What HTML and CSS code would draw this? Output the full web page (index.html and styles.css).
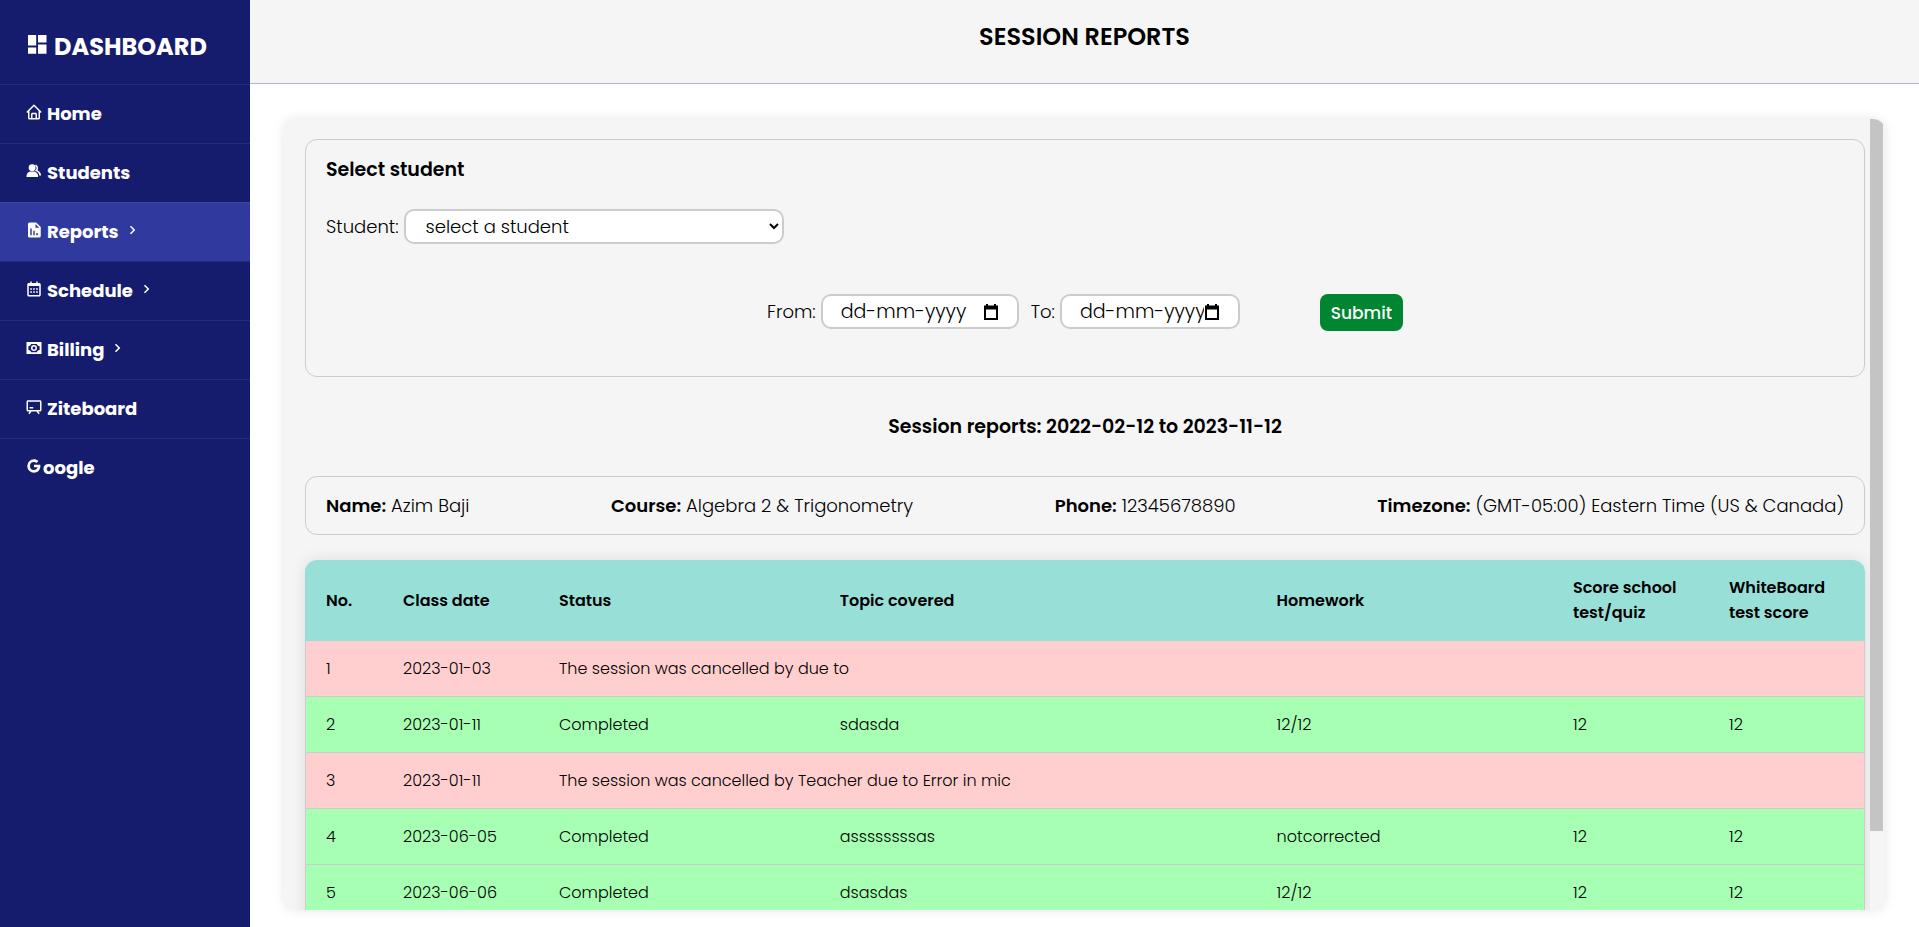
FILE: index.html
```html
<!DOCTYPE html>
<html lang="en">
<head>
<meta charset="utf-8">
<title>Session reports</title>
<link rel="stylesheet" href="styles.css">
</head>
<body>
<div class="app">
  <nav class="sidebar">
    <a class="brand" href="#">
      <svg class="brand-icon" viewBox="0 0 24 24"><path d="M3 3h8.200v10.500H3zM13 3h8.500v7.500H13zM3 15.500h8.200v6.300H3zM13 12.500h8.500v9.300H13z"/></svg>
      <span>DASHBOARD</span>
    </a>
    <a class="nav-item" href="#">
      <svg class="icon" viewBox="0 0 24 24"><path d="M3 13h1v7c0 1.103.897 2 2 2h12c1.103 0 2-.897 2-2v-7h1a1 1 0 0 0 .707-1.707l-9-9a.999.999 0 0 0-1.414 0l-9 9A1 1 0 0 0 3 13zm7 7v-5h4v5h-4zm2-15.586 6 6V20h-2v-5c0-1.103-.897-2-2-2h-4c-1.103 0-2 .897-2 2v5H6v-9.586l6-6z"/></svg>
      <span>Home</span>
    </a>
    <a class="nav-item" href="#">
      <svg class="icon" viewBox="0 0 24 24"><circle cx="9.500" cy="7.500" r="4.600"/><path d="M11 12.500H8c-3.309 0-6 2.691-6 6V20h15.500v-1.500c0-3.309-3.191-6-6.500-6z"/><path d="M16.604 11.048a5.670 5.670 0 0 0 .751-3.440c-.179-1.784-1.175-3.361-2.803-4.440l-1.105 1.666c1.119.742 1.800 1.799 1.918 2.974a3.693 3.693 0 0 1-1.072 2.986l-1.192 1.192 1.618.475C18.951 13.701 19 17.957 19 18h2.500c0-1.789-1.456-5.285-4.896-6.952z"/></svg>
      <span>Students</span>
    </a>
    <a class="nav-item active" href="#">
      <svg class="icon" viewBox="0 0 24 24"><path fill-rule="evenodd" d="m21 8-6-6H6a2 2 0 0 0-2 2v16a2 2 0 0 0 2 2h13a2 2 0 0 0 2-2V8zM9 19H7v-9h2v9zm4 0h-2v-6h2v6zm4 0h-2v-3h2v3zM14 9V4l5 5h-5z"/></svg>
      <span>Reports</span>
      <svg class="chevron" viewBox="0 0 24 24"><path d="M10.707 17.707 16.414 12l-5.707-5.707-1.414 1.414L13.586 12l-4.293 4.293z"/></svg>
    </a>
    <a class="nav-item" href="#">
      <svg class="icon" viewBox="0 0 24 24"><path fill-rule="evenodd" d="M7 2h2v2h6V2h2v2h2c1.103 0 2 .897 2 2v14c0 1.103-.897 2-2 2H5c-1.103 0-2-.897-2-2V6c0-1.103.897-2 2-2h2V2zM5 8v12h14V8H5zm2 3h2.200v2H7zm3.900 0h2.200v2h-2.200zm3.900 0H17v2h-2.200zM7 15h2.200v2H7zm3.900 0h2.200v2h-2.200zm3.900 0H17v2h-2.200z"/></svg>
      <span>Schedule</span>
      <svg class="chevron" viewBox="0 0 24 24"><path d="M10.707 17.707 16.414 12l-5.707-5.707-1.414 1.414L13.586 12l-4.293 4.293z"/></svg>
    </a>
    <a class="nav-item" href="#">
      <svg class="icon" viewBox="0 0 24 24"><path fill-rule="evenodd" d="M2 4h20v16H2zM8 6.500c0 1.700-1.600 3-3.500 3v5c1.900 0 3.500 1.300 3.500 3h8c0-1.700 1.600-3 3.500-3v-5c-1.900 0-3.500-1.300-3.500-3zM12 8a4 4 0 1 1 0 8 4 4 0 0 1 0-8zm0 2a2 2 0 1 0 0 4 2 2 0 0 0 0-4z"/></svg>
      <span>Billing</span>
      <svg class="chevron" viewBox="0 0 24 24"><path d="M10.707 17.707 16.414 12l-5.707-5.707-1.414 1.414L13.586 12l-4.293 4.293z"/></svg>
    </a>
    <a class="nav-item" href="#">
      <svg class="icon" viewBox="0 0 24 24"><path fill-rule="evenodd" d="M4 3h16c1.103 0 2 .897 2 2v11c0 1.103-.897 2-2 2h-2.200l1.800 2.600-1.600 1.200-2.700-3.800H8.700L6 21.800l-1.600-1.200L6.200 18H4c-1.103 0-2-.897-2-2V5c0-1.103.897-2 2-2zm0 2v11h16V5zm2 7h5v2H6z"/></svg>
      <span>Ziteboard</span>
    </a>
    <a class="nav-item joined" href="#" aria-label="Google">
      <svg class="icon" viewBox="0 0 24 24"><path d="M20.283 10.356h-8.327v3.451h4.792c-.446 2.193-2.313 3.453-4.792 3.453a5.270 5.270 0 0 1-5.279-5.280 5.270 5.270 0 0 1 5.279-5.279c1.259 0 2.397.447 3.290 1.178l2.600-2.599c-1.584-1.381-3.615-2.233-5.890-2.233a8.908 8.908 0 0 0-8.934 8.934 8.907 8.907 0 0 0 8.934 8.934c4.467 0 8.529-3.249 8.529-8.934 0-.528-.081-1.097-.202-1.625z"/></svg>
      <span>oogle</span>
    </a>
  </nav>
  <div class="page">
    <header class="topbar"><h1>SESSION REPORTS</h1></header>
    <main class="content">
      <div class="panel">
        <div class="panel-body">
          <form class="card filter">
            <h2>Select student</h2>
            <div class="field">
              <label for="student">Student:</label>
              <select id="student" class="control"><option>select a student</option></select>
            </div>
            <div class="dates">
              <div class="field">
                <label for="from">From:</label>
                <div class="control date">
                  <input id="from" type="text" placeholder="dd-mm-yyyy">
                  <svg class="cal" viewBox="0 0 16 16"><path fill-rule="evenodd" d="M3 0h2v1.500h6V0h2v1.500h2V16H1V1.500h2zM3 5.500V14h10V5.500z"/></svg>
                </div>
              </div>
              <div class="field">
                <label for="to">To:</label>
                <div class="control date narrow">
                  <input id="to" type="text" placeholder="dd-mm-yyyy">
                  <svg class="cal" viewBox="0 0 16 16"><path fill-rule="evenodd" d="M3 0h2v1.500h6V0h2v1.500h2V16H1V1.500h2zM3 5.500V14h10V5.500z"/></svg>
                </div>
              </div>
              <button class="submit" type="submit">Submit</button>
            </div>
          </form>
          <h2 class="range">Session reports: 2022-02-12 to 2023-11-12</h2>
          <div class="card info">
            <span><b>Name:</b> Azim Baji</span>
            <span><b>Course:</b> Algebra 2 &amp; Trigonometry</span>
            <span><b>Phone:</b> 12345678890</span>
            <span><b>Timezone:</b> (GMT-05:00) Eastern Time (US &amp; Canada)</span>
          </div>
          <table class="report">
            <colgroup><col class="w5"><col class="w10"><col class="w18"><col class="w28"><col class="w19"><col class="w10"><col class="w10"></colgroup>
            <thead>
              <tr><th>No.</th><th>Class date</th><th>Status</th><th>Topic covered</th><th>Homework</th><th>Score school test/quiz</th><th>WhiteBoard test score</th></tr>
            </thead>
            <tbody>
              <tr class="cancelled"><td>1</td><td>2023-01-03</td><td colspan="5">The session was cancelled by due to</td></tr>
              <tr><td>2</td><td>2023-01-11</td><td>Completed</td><td>sdasda</td><td>12/12</td><td>12</td><td>12</td></tr>
              <tr class="cancelled"><td>3</td><td>2023-01-11</td><td colspan="5">The session was cancelled by Teacher due to Error in mic</td></tr>
              <tr><td>4</td><td>2023-06-05</td><td>Completed</td><td>assssssssas</td><td>notcorrected</td><td>12</td><td>12</td></tr>
              <tr><td>5</td><td>2023-06-06</td><td>Completed</td><td>dsasdas</td><td>12/12</td><td>12</td><td>12</td></tr>
            </tbody>
          </table>
        </div>
        <div class="scroll-track"><div class="scroll-thumb"></div></div>
      </div>
    </main>
  </div>
</div>
</body>
</html>
```
FILE: styles.css
```css
* { box-sizing: border-box; }
body {
  margin: 0;
  font-family: "Poppins", "Inter", sans-serif;
  font-size: 18px;
  font-weight: 300;
  line-height: 26px;
  color: #000;
  background: #fff;
}
h1, h2 { margin: 0; font-weight: 600; }
b { font-weight: 600; }
.app { display: flex; height: 100vh; overflow: hidden; }

.sidebar { flex: 0 0 250px; background: #161c6d; }
.brand, .nav-item {
  display: flex;
  align-items: center;
  color: #fff;
  text-decoration: none;
  font-weight: 700;
}
.brand { height: 84px; padding: 10px 25px 0; gap: 5px; font-size: 24px; }
.brand-icon { width: 24px; height: 24px; margin-bottom: 6px; fill: #fff; }
.nav-item {
  height: 59px;
  padding: 0 25px;
  gap: 4px;
  font-size: 18px;
  border-top: 1px solid #262b76;
}
.nav-item.active { background: #30399d; border-color: #3d45a3; }
.nav-item.joined { gap: 0; }
.icon, .chevron { width: 18px; height: 18px; margin-bottom: 4px; fill: #fff; }

.page { flex: 1; min-width: 0; display: flex; flex-direction: column; }
.topbar {
  height: 84px;
  padding: 20px;
  text-align: center;
  background: #f5f5f5;
  border-bottom: 1px solid #b6b5d1;
}
.topbar h1 { font-size: 24px; line-height: 34px; }
.content { flex: 1; min-height: 0; padding: 35px 34px 17px; }
.panel {
  display: flex;
  height: 100%;
  overflow: hidden;
  border-radius: 12px;
  background: #f5f5f5;
  box-shadow: 0 0 12px rgba(0, 0, 0, .1);
}
.panel-body { flex: 1; min-width: 0; overflow: hidden; padding: 20px 5px 0 21px; }
.scroll-track { flex: 0 0 15px; padding-right: 2px; }
.scroll-thumb { height: 90%; background: #c4c4c4; }

.card { border: 1px solid #ccc; border-radius: 12px; }
.filter { height: 238px; padding: 16px 20px; }
.filter h2 { font-size: 19px; line-height: 28px; }
.field { display: flex; align-items: center; gap: 5px; }
.filter > .field { margin-top: 25px; }
.control {
  height: 35px;
  border: 2px solid #ccc;
  border-radius: 10px;
  background: #fff;
  font: inherit;
  color: #000;
}
select.control { width: 380px; padding: 0 0 0 16px; }
.dates { display: flex; justify-content: center; align-items: flex-start; gap: 12px; margin-top: 50px; }
.date { display: flex; align-items: center; width: 198px; padding: 0 18px; }
.date.narrow { width: 180px; }
.date input {
  flex: 1;
  min-width: 0;
  padding: 0;
  border: 0;
  outline: 0;
  background: transparent;
  font: inherit;
  font-size: 19px;
}
.date input::placeholder { color: #000; opacity: 1; }
.cal { flex: 0 0 16px; height: 16px; }
.submit {
  width: 83px;
  height: 37px;
  margin-left: 68px;
  padding: 0;
  border: 0;
  border-radius: 8px;
  background: #008631;
  color: #fff;
  font: inherit;
  font-size: 17px;
  font-weight: 500;
}
.range { margin: 36px 0; font-size: 19px; line-height: 27px; text-align: center; }
.info {
  display: flex;
  justify-content: space-between;
  align-items: center;
  height: 59px;
  padding: 0 20px;
}
.report {
  width: 100%;
  margin-top: 25px;
  table-layout: fixed;
  border-collapse: separate;
  border-spacing: 0;
  border-radius: 12px 12px 0 0;
  overflow: hidden;
  box-shadow: 0 0 16px rgba(0, 0, 0, .1);
  font-size: 16px;
  line-height: 25px;
}
.w5 { width: 5%; }
.w10 { width: 10%; }
.w18 { width: 18%; }
.w28 { width: 28%; }
.w19 { width: 19%; }
.report th, .report td { padding: 15px 20px; text-align: left; }
.report th { padding: 15px 20px 16px; background: #98dfd8; font-weight: 600; }
.report td { background: #a6ffb3; border-bottom: 1px solid #ccc; }
.report .cancelled td { background: #ffcfcf; }
.report th:first-child { border-left: 1px solid #98dfd8; }
.report td:first-child { border-left: 1px solid #ccc; }
.report td:last-child { border-right: 1px solid #ccc; }
```
